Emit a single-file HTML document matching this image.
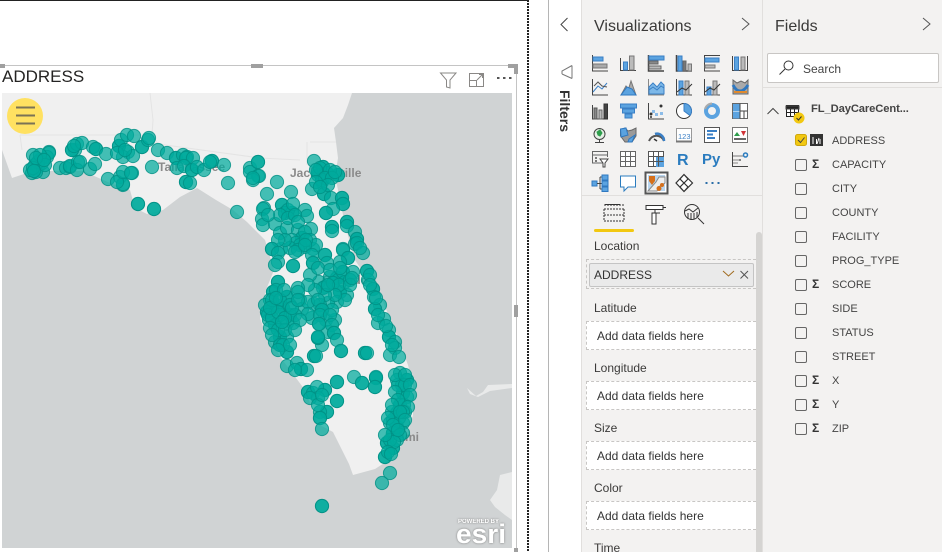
<!DOCTYPE html>
<html><head><meta charset="utf-8"><style>
html,body{margin:0;padding:0;width:942px;height:552px;overflow:hidden;background:#fff;font-family:"Liberation Sans",sans-serif;color:#333}
.a{position:absolute;white-space:nowrap}
.lb{position:absolute;left:594px;font-size:12px;line-height:14px;color:#3b3a39}
.bx{position:absolute;left:586px;width:169px;height:27px;background:#fff;border:1px dashed #c8c6c4;border-right:none;font-size:12px;line-height:29px;color:#333;text-indent:10px}
.f{position:absolute;left:832px;font-size:11px;line-height:14px;color:#444}
.c{position:absolute;left:795px;width:10px;height:10px;border:1px solid #666;border-radius:2px}
.s{position:absolute;left:812px;font-size:12px;line-height:14px;font-weight:bold;color:#333}
.d circle{r:6.6px}
</style></head><body>
<div class="a" style="left:0;top:0;width:527px;height:1px;background:#222"></div>
<div class="a" style="left:527px;top:0;width:2px;height:552px;background:repeating-linear-gradient(#222 0 2px,#fff 2px 3px)"></div>
<div class="a" style="left:0;top:65px;width:516px;height:1px;background:#c4c4c4"></div>
<div class="a" style="left:516px;top:65px;width:1px;height:487px;background:#c4c4c4"></div>
<div class="a" style="left:0;top:64px;width:5px;height:4px;background:#a0a0a0"></div>
<div class="a" style="left:251px;top:64px;width:12px;height:4px;background:#a0a0a0"></div>
<div class="a" style="left:508px;top:64px;width:10px;height:4px;background:#a0a0a0"></div>
<div class="a" style="left:514px;top:64px;width:4px;height:10px;background:#a0a0a0"></div>
<div class="a" style="left:514px;top:305px;width:4px;height:12px;background:#a0a0a0"></div>
<div class="a" style="left:514px;top:548px;width:4px;height:4px;background:#a0a0a0"></div>
<div class="a" style="left:2px;top:66px;font-size:17px;line-height:22px;color:#252423">ADDRESS</div>
<svg class="a" style="left:436px;top:68px" width="78" height="22" fill="none" stroke="#8a8886" stroke-width="1">
<path d="M4.5 5H20L14 12V20L10.500 19V12Z"/>
<path d="M33.500 5.500H47.500V18.500H33.500ZM33.500 12.500H40.500V18.500M41 12L46.500 6.500M43 6.500H46.500V10"/>
<path d="M61 10h2.500M67 10h2.500M73 10h2.500" stroke="#555" stroke-width="2"/>
</svg>

<svg class="a" style="left:2px;top:93px" width="510" height="455" viewBox="2 93 510 455">
<rect x="2" y="93" width="510" height="455" fill="#d0d3d4"/>
<path d="M2 93H352L348 105L343 118L334 128L336 142L338 158L335 176L338 190L345 225L355 260L368 280L380 295L395 330L408 365L413 385L413 415L406 438L397 452L386 462L375 469L353 475L349 464L338 442L333 432L318 424L305 390L284 362L266 335L260 318L266 290L274 270L265 240L247 222L233 210L216 200L197 188L180 197L163 210L147 214L135 208L130 190L110 183L83 171L33 171L12 178L2 150Z" fill="#f0f0f0"/>
<path d="M467 388L476 396L483 392L488 385L512 384V388L490 391L478 397L470 394ZM490 500L497 490L500 475L512 472V520L505 515L495 507Z" fill="#e9eaea"/>
<path d="M150 93L153 120L152 135M20 135H152L158 144L260 158L300 160M20 135L22 150M310 142H336M307 142V165" fill="none" stroke="#e4e4e4" stroke-width="1"/>
<g font-family="Liberation Sans" font-size="12" font-weight="bold" fill="#8a8a8a">
<text x="158" y="171">Tallahassee</text><text x="290" y="177">Jacksonville</text><text x="322" y="284">Orlando</text><text x="385" y="441">Miami</text>
</g>
<g class="d" fill="#00ab9c" fill-opacity=".72" stroke="#009084" stroke-opacity=".8">
<circle cx="33" cy="155" r="6"/><circle cx="49" cy="152" r="6"/><circle cx="40" cy="160" r="6"/><circle cx="38" cy="167" r="6"/><circle cx="32" cy="173" r="6"/><circle cx="43" cy="172" r="6"/><circle cx="35" cy="165" r="6"/><circle cx="47" cy="157" r="6"/><circle cx="49" cy="153" r="6"/><circle cx="42" cy="163" r="6"/><circle cx="36" cy="172" r="6"/><circle cx="38" cy="162" r="6"/><circle cx="30" cy="170" r="6"/>
<circle cx="40" cy="155" r="6"/><circle cx="45" cy="165" r="6"/><circle cx="33" cy="168" r="6"/><circle cx="75" cy="150" r="6"/><circle cx="36" cy="158" r="6"/><circle cx="44" cy="160" r="6"/><circle cx="34" cy="171" r="6"/>
<circle cx="60" cy="168" r="6"/><circle cx="66" cy="168" r="6"/><circle cx="70" cy="167" r="6"/><circle cx="70" cy="166" r="6"/><circle cx="78" cy="162" r="6"/><circle cx="77" cy="170" r="6"/><circle cx="80" cy="162" r="6"/><circle cx="90" cy="169" r="6"/><circle cx="95" cy="164" r="6"/><circle cx="72" cy="150" r="6"/><circle cx="72" cy="150" r="6"/><circle cx="77" cy="144" r="6"/><circle cx="82" cy="143" r="6"/><circle cx="74" cy="146" r="6"/><circle cx="96" cy="149" r="6"/><circle cx="93" cy="147" r="6"/><circle cx="96" cy="149" r="6"/><circle cx="106" cy="154" r="6"/>
<circle cx="108" cy="179" r="6"/><circle cx="120" cy="177" r="6"/><circle cx="123" cy="185" r="6"/><circle cx="123" cy="184" r="6"/><circle cx="132" cy="173" r="6"/><circle cx="117" cy="182" r="6"/><circle cx="123" cy="172" r="6"/><circle cx="131" cy="173" r="6"/>
<circle cx="138" cy="204" r="6"/><circle cx="138" cy="204" r="6"/><circle cx="154" cy="209" r="6"/><circle cx="154" cy="209" r="6"/>
<circle cx="119" cy="146" r="6"/><circle cx="119" cy="146" r="6"/><circle cx="121" cy="140" r="6"/><circle cx="127" cy="135" r="6"/><circle cx="134" cy="136" r="6"/><circle cx="128" cy="152" r="6"/><circle cx="123" cy="157" r="6"/><circle cx="133" cy="156" r="6"/><circle cx="117" cy="153" r="6"/><circle cx="125" cy="150" r="6"/><circle cx="142" cy="147" r="6"/><circle cx="142" cy="147" r="6"/><circle cx="148" cy="140" r="6"/><circle cx="149" cy="138" r="6"/>
<circle cx="152" cy="167" r="6"/><circle cx="158" cy="150" r="6"/><circle cx="167" cy="153" r="6"/><circle cx="176" cy="158" r="6"/><circle cx="176" cy="158" r="6"/><circle cx="183" cy="155" r="6"/><circle cx="187" cy="157" r="6"/><circle cx="186" cy="158" r="6"/><circle cx="193" cy="158" r="6"/><circle cx="177" cy="168" r="6"/><circle cx="184" cy="166" r="6"/><circle cx="192" cy="170" r="6"/><circle cx="192" cy="170" r="6"/><circle cx="197" cy="167" r="6"/><circle cx="186" cy="182" r="6"/><circle cx="186" cy="182" r="6"/><circle cx="190" cy="183" r="6"/><circle cx="204" cy="170" r="6"/><circle cx="212" cy="161" r="6"/><circle cx="212" cy="161" r="6"/><circle cx="210" cy="162" r="6"/><circle cx="224" cy="165" r="6"/><circle cx="228" cy="183" r="6"/>
<circle cx="237" cy="212" r="6"/><circle cx="250" cy="168" r="6"/><circle cx="250" cy="172" r="6"/><circle cx="258" cy="162" r="6"/><circle cx="258" cy="162" r="6"/><circle cx="258" cy="176" r="6"/><circle cx="259" cy="176" r="6"/><circle cx="253" cy="180" r="6"/><circle cx="253" cy="178" r="6"/><circle cx="277" cy="182" r="6"/><circle cx="267" cy="194" r="6"/><circle cx="291" cy="192" r="6"/><circle cx="264" cy="208" r="6"/><circle cx="263" cy="209" r="6"/><circle cx="262" cy="219" r="6"/><circle cx="282" cy="205" r="6"/><circle cx="282" cy="205" r="6"/><circle cx="263" cy="225" r="6"/><circle cx="275" cy="224" r="6"/><circle cx="280" cy="233" r="6"/><circle cx="287" cy="228" r="6"/><circle cx="285" cy="213" r="6"/><circle cx="285" cy="213" r="6"/><circle cx="292" cy="213" r="6"/><circle cx="292" cy="213" r="6"/><circle cx="288" cy="210" r="6"/><circle cx="293" cy="204" r="6"/><circle cx="305" cy="210" r="6"/><circle cx="307" cy="216" r="6"/><circle cx="311" cy="229" r="6"/><circle cx="298" cy="230" r="6"/><circle cx="302" cy="238" r="6"/><circle cx="302" cy="238" r="6"/><circle cx="292" cy="240" r="6"/><circle cx="305" cy="247" r="6"/><circle cx="296" cy="243" r="6"/><circle cx="272" cy="249" r="6"/><circle cx="281" cy="249" r="6"/><circle cx="313" cy="249" r="6"/>
<circle cx="280" cy="215" r="6"/><circle cx="288" cy="218" r="6"/><circle cx="295" cy="215" r="6"/><circle cx="298" cy="222" r="6"/><circle cx="305" cy="232" r="6"/><circle cx="310" cy="240" r="6"/><circle cx="316" cy="245" r="6"/><circle cx="300" cy="245" r="6"/><circle cx="290" cy="248" r="6"/><circle cx="285" cy="240" r="6"/><circle cx="278" cy="240" r="6"/><circle cx="268" cy="215" r="6"/><circle cx="298" cy="250" r="6"/><circle cx="306" cy="240" r="6"/>
<circle cx="314" cy="161" r="6"/><circle cx="323" cy="167" r="6"/><circle cx="323" cy="167" r="6"/><circle cx="318" cy="175" r="6"/><circle cx="318" cy="172" r="6"/><circle cx="327" cy="173" r="6"/><circle cx="327" cy="173" r="6"/><circle cx="320" cy="168" r="6"/><circle cx="338" cy="175" r="6"/><circle cx="338" cy="175" r="6"/><circle cx="330" cy="170" r="6"/><circle cx="322" cy="182" r="6"/><circle cx="322" cy="180" r="6"/><circle cx="312" cy="189" r="6"/><circle cx="324" cy="194" r="6"/><circle cx="324" cy="194" r="6"/><circle cx="331" cy="198" r="6"/><circle cx="342" cy="198" r="6"/><circle cx="342" cy="198" r="6"/><circle cx="343" cy="204" r="6"/><circle cx="343" cy="204" r="6"/><circle cx="333" cy="209" r="6"/><circle cx="326" cy="213" r="6"/><circle cx="326" cy="213" r="6"/><circle cx="332" cy="227" r="6"/><circle cx="332" cy="227" r="6"/><circle cx="332" cy="231" r="6"/><circle cx="347" cy="222" r="6"/><circle cx="347" cy="222" r="6"/><circle cx="347" cy="226" r="6"/><circle cx="355" cy="232" r="6"/><circle cx="357" cy="239" r="6"/><circle cx="357" cy="239" r="6"/><circle cx="355" cy="244" r="6"/><circle cx="343" cy="249" r="6"/>
<circle cx="316" cy="170" r="6"/><circle cx="325" cy="178" r="6"/><circle cx="332" cy="178" r="6"/><circle cx="316" cy="182" r="6"/><circle cx="328" cy="185" r="6"/><circle cx="320" cy="187" r="6"/><circle cx="335" cy="172" r="6"/>
<circle cx="272" cy="249" r="6"/><circle cx="278" cy="253" r="6"/><circle cx="278" cy="262" r="6"/><circle cx="275" cy="265" r="6"/><circle cx="293" cy="266" r="6"/><circle cx="293" cy="266" r="6"/><circle cx="295" cy="252" r="6"/><circle cx="305" cy="245" r="6"/><circle cx="312" cy="255" r="6"/><circle cx="313" cy="263" r="6"/><circle cx="313" cy="263" r="6"/><circle cx="325" cy="255" r="6"/><circle cx="325" cy="255" r="6"/><circle cx="327" cy="263" r="6"/><circle cx="343" cy="250" r="6"/><circle cx="348" cy="258" r="6"/><circle cx="348" cy="258" r="6"/><circle cx="340" cy="262" r="6"/><circle cx="357" cy="243" r="6"/><circle cx="363" cy="253" r="6"/><circle cx="360" cy="248" r="6"/>
<circle cx="367" cy="271" r="6"/><circle cx="367" cy="271" r="6"/><circle cx="368" cy="280" r="6"/><circle cx="373" cy="289" r="6"/><circle cx="373" cy="289" r="6"/><circle cx="374" cy="297" r="6"/><circle cx="380" cy="305" r="6"/><circle cx="375" cy="309" r="6"/><circle cx="375" cy="309" r="6"/><circle cx="384" cy="319" r="6"/><circle cx="378" cy="323" r="6"/><circle cx="389" cy="330" r="6"/><circle cx="389" cy="337" r="6"/><circle cx="389" cy="337" r="6"/><circle cx="395" cy="342" r="6"/><circle cx="395" cy="348" r="6"/><circle cx="390" cy="355" r="6"/><circle cx="399" cy="357" r="6"/>
<circle cx="370" cy="275" r="6"/><circle cx="370" cy="285" r="6"/><circle cx="376" cy="298" r="6"/><circle cx="378" cy="315" r="6"/><circle cx="392" cy="345" r="6"/><circle cx="386" cy="326" r="6"/>
<circle cx="319" cy="282" r="6"/><circle cx="325" cy="287" r="6"/><circle cx="330" cy="277" r="6"/><circle cx="337" cy="278" r="6"/><circle cx="337" cy="278" r="6"/><circle cx="343" cy="272" r="6"/><circle cx="343" cy="272" r="6"/><circle cx="353" cy="272" r="6"/><circle cx="340" cy="292" r="6"/><circle cx="340" cy="292" r="6"/><circle cx="347" cy="295" r="6"/><circle cx="337" cy="302" r="6"/><circle cx="328" cy="303" r="6"/><circle cx="323" cy="288" r="6"/><circle cx="333" cy="283" r="6"/><circle cx="333" cy="283" r="6"/><circle cx="345" cy="282" r="6"/><circle cx="339" cy="285" r="6"/><circle cx="350" cy="280" r="6"/>
<circle cx="310" cy="275" r="6"/><circle cx="318" cy="268" r="6"/><circle cx="330" cy="270" r="6"/><circle cx="340" cy="268" r="6"/><circle cx="350" cy="285" r="6"/><circle cx="345" cy="300" r="6"/><circle cx="335" cy="295" r="6"/><circle cx="325" cy="295" r="6"/><circle cx="315" cy="290" r="6"/><circle cx="308" cy="285" r="6"/><circle cx="328" cy="285" r="6"/><circle cx="352" cy="278" r="6"/><circle cx="320" cy="305" r="6"/><circle cx="312" cy="318" r="6"/><circle cx="326" cy="320" r="6"/><circle cx="328" cy="332" r="6"/><circle cx="322" cy="345" r="6"/><circle cx="335" cy="320" r="6"/><circle cx="300" cy="300" r="6"/><circle cx="314" cy="304" r="6"/><circle cx="332" cy="310" r="6"/>
<circle cx="278" cy="282" r="6"/><circle cx="278" cy="282" r="6"/><circle cx="273" cy="292" r="6"/><circle cx="273" cy="292" r="6"/><circle cx="270" cy="300" r="6"/><circle cx="287" cy="297" r="6"/><circle cx="287" cy="297" r="6"/><circle cx="298" cy="288" r="6"/><circle cx="298" cy="292" r="6"/><circle cx="283" cy="308" r="6"/><circle cx="283" cy="308" r="6"/><circle cx="290" cy="315" r="6"/><circle cx="290" cy="315" r="6"/><circle cx="267" cy="312" r="6"/><circle cx="267" cy="312" r="6"/><circle cx="269" cy="320" r="6"/><circle cx="275" cy="325" r="6"/><circle cx="275" cy="325" r="6"/><circle cx="287" cy="323" r="6"/><circle cx="293" cy="323" r="6"/><circle cx="276" cy="305" r="6"/><circle cx="272" cy="310" r="6"/><circle cx="280" cy="315" r="6"/><circle cx="280" cy="337" r="6"/><circle cx="280" cy="337" r="6"/><circle cx="287" cy="337" r="6"/><circle cx="275" cy="342" r="6"/><circle cx="280" cy="345" r="6"/><circle cx="280" cy="345" r="6"/><circle cx="287" cy="352" r="6"/><circle cx="287" cy="352" r="6"/><circle cx="302" cy="309" r="6"/><circle cx="308" cy="302" r="6"/><circle cx="318" cy="300" r="6"/><circle cx="308" cy="314" r="6"/><circle cx="322" cy="310" r="6"/><circle cx="322" cy="310" r="6"/><circle cx="320" cy="315" r="6"/><circle cx="330" cy="315" r="6"/><circle cx="319" cy="324" r="6"/><circle cx="319" cy="324" r="6"/><circle cx="332" cy="325" r="6"/><circle cx="334" cy="333" r="6"/><circle cx="334" cy="333" r="6"/><circle cx="318" cy="338" r="6"/><circle cx="318" cy="338" r="6"/><circle cx="318" cy="337" r="6"/><circle cx="337" cy="340" r="6"/><circle cx="341" cy="351" r="6"/><circle cx="341" cy="351" r="6"/><circle cx="314" cy="356" r="6"/><circle cx="314" cy="356" r="6"/><circle cx="316" cy="356" r="6"/><circle cx="365" cy="353" r="6"/><circle cx="365" cy="353" r="6"/><circle cx="367" cy="353" r="6"/>
<circle cx="265" cy="305" r="6"/><circle cx="268" cy="315" r="6"/><circle cx="272" cy="300" r="6"/><circle cx="276" cy="290" r="6"/><circle cx="280" cy="300" r="6"/><circle cx="284" cy="290" r="6"/><circle cx="290" cy="305" r="6"/><circle cx="295" cy="315" r="6"/><circle cx="300" cy="320" r="6"/><circle cx="272" cy="318" r="6"/><circle cx="278" cy="312" r="6"/><circle cx="285" cy="318" r="6"/><circle cx="292" cy="308" r="6"/><circle cx="298" cy="300" r="6"/><circle cx="270" cy="328" r="6"/><circle cx="278" cy="330" r="6"/><circle cx="285" cy="330" r="6"/><circle cx="295" cy="330" r="6"/><circle cx="272" cy="335" r="6"/><circle cx="283" cy="345" r="6"/><circle cx="290" cy="345" r="6"/><circle cx="278" cy="350" r="6"/><circle cx="270" cy="308" r="6"/><circle cx="282" cy="322" r="6"/><circle cx="276" cy="298" r="6"/>
<circle cx="287" cy="366" r="6"/><circle cx="297" cy="363" r="6"/><circle cx="301" cy="369" r="6"/><circle cx="301" cy="369" r="6"/><circle cx="307" cy="370" r="6"/><circle cx="295" cy="370" r="6"/>
<circle cx="337" cy="382" r="6"/><circle cx="337" cy="382" r="6"/><circle cx="354" cy="377" r="6"/><circle cx="362" cy="383" r="6"/><circle cx="362" cy="383" r="6"/><circle cx="376" cy="378" r="6"/><circle cx="376" cy="378" r="6"/><circle cx="376" cy="377" r="6"/><circle cx="375" cy="387" r="6"/><circle cx="375" cy="387" r="6"/>
<circle cx="308" cy="392" r="6"/><circle cx="308" cy="392" r="6"/><circle cx="313" cy="393" r="6"/><circle cx="325" cy="390" r="6"/><circle cx="325" cy="390" r="6"/><circle cx="317" cy="387" r="6"/><circle cx="318" cy="398" r="6"/><circle cx="310" cy="398" r="6"/><circle cx="337" cy="401" r="6"/><circle cx="337" cy="401" r="6"/><circle cx="327" cy="412" r="6"/><circle cx="327" cy="412" r="6"/><circle cx="320" cy="412" r="6"/><circle cx="320" cy="418" r="6"/><circle cx="320" cy="418" r="6"/><circle cx="322" cy="429" r="6"/><circle cx="318" cy="405" r="6"/><circle cx="322" cy="395" r="6"/>
<circle cx="400" cy="373" r="6"/><circle cx="407" cy="380" r="6"/><circle cx="407" cy="380" r="6"/><circle cx="397" cy="380" r="6"/><circle cx="403" cy="393" r="6"/><circle cx="403" cy="393" r="6"/><circle cx="402" cy="385" r="6"/><circle cx="407" cy="397" r="6"/><circle cx="400" cy="405" r="6"/><circle cx="400" cy="405" r="6"/><circle cx="405" cy="412" r="6"/><circle cx="397" cy="413" r="6"/><circle cx="397" cy="413" r="6"/><circle cx="390" cy="423" r="6"/><circle cx="397" cy="427" r="6"/><circle cx="397" cy="427" r="6"/><circle cx="403" cy="423" r="6"/><circle cx="403" cy="433" r="6"/><circle cx="393" cy="433" r="6"/><circle cx="393" cy="433" r="6"/><circle cx="387" cy="443" r="6"/><circle cx="387" cy="443" r="6"/><circle cx="393" cy="448" r="6"/><circle cx="393" cy="448" r="6"/><circle cx="385" cy="457" r="6"/><circle cx="385" cy="457" r="6"/><circle cx="397" cy="440" r="6"/><circle cx="399" cy="418" r="6"/><circle cx="393" cy="420" r="6"/><circle cx="392" cy="412" r="6"/><circle cx="390" cy="440" r="6"/><circle cx="398" cy="385" r="6"/><circle cx="405" cy="385" r="6"/><circle cx="404" cy="405" r="6"/>
<circle cx="395" cy="375" r="6"/><circle cx="405" cy="375" r="6"/><circle cx="410" cy="385" r="6"/><circle cx="410" cy="395" r="6"/><circle cx="395" cy="392" r="6"/><circle cx="398" cy="400" r="6"/><circle cx="408" cy="407" r="6"/><circle cx="403" cy="412" r="6"/><circle cx="392" cy="405" r="6"/><circle cx="400" cy="412" r="6"/><circle cx="388" cy="418" r="6"/><circle cx="393" cy="425" r="6"/><circle cx="405" cy="420" r="6"/><circle cx="400" cy="435" r="6"/><circle cx="394" cy="442" r="6"/><circle cx="388" cy="452" r="6"/><circle cx="398" cy="430" r="6"/><circle cx="385" cy="435" r="6"/><circle cx="391" cy="454" r="6"/>
<circle cx="390" cy="473" r="6"/><circle cx="382" cy="483" r="6"/><circle cx="322" cy="506" r="6"/><circle cx="322" cy="506" r="6"/>
</g>
<circle cx="25" cy="116" r="18" fill="#ffe161"/>
<path d="M16 107.500H35M16 115.500H35M16 123.500H35" stroke="#7b7355" stroke-width="2"/>
<g fill="#fff" style="filter:drop-shadow(0 0 1px #777)" font-family="Liberation Sans">
<text x="458" y="523" font-size="6" font-weight="bold">POWERED BY</text>
<text x="456" y="543" font-size="27" font-weight="bold" textLength="50" lengthAdjust="spacingAndGlyphs">esri</text>
</g>
</svg>

<!-- filter pane -->
<div class="a" style="left:548px;top:0;width:1px;height:552px;background:#b5b5b5"></div>
<div class="a" style="left:581px;top:0;width:361px;height:552px;background:#f3f2f1;border-left:1px solid #e1dfdd;box-sizing:border-box"></div>
<div class="a" style="left:762px;top:0;width:1px;height:552px;background:#e1dfdd"></div>
<svg class="a" style="left:555px;top:15px" width="20" height="65" fill="none" stroke="#444"><path d="M12.500 3L6 9.500L12.500 16"/><path d="M17 50.500L7 56V59M17 63.500V50.500M7 59L17 63.500" stroke="#777"/></svg>
<div class="a" style="left:565px;top:111px;width:0;height:0"><div style="position:absolute;left:-22px;top:-8px;width:44px;height:16px;transform:rotate(90deg);font-size:14px;font-weight:bold;line-height:16px;text-align:center;color:#333">Filters</div></div>

<!-- viz -->
<div class="a" style="left:594px;top:17px;font-size:16px;line-height:20px;color:#3b3a39">Visualizations</div>
<svg class="a" style="left:740px;top:16px" width="12" height="16" fill="none" stroke="#555"><path d="M2 2L9 8L2 14"/></svg>
<svg class="a" style="left:590px;top:52px" width="165" height="180" viewBox="590 52 165 180" fill="none" stroke="#444" stroke-width="1">
<!-- row 1 -->
<g transform="translate(592,55)"><path d="M.5 0V16H16"/><rect x="1" y="2" width="10" height="4" stroke="#3a7fc5" fill="#5ba3e0"/><rect x="1" y="9" width="14" height="4" stroke="#777" fill="#aaa"/></g>
<g transform="translate(620,55)"><path d="M.5 3V15.500H16"/><rect x="3.500" y="7" width="4" height="8" stroke="#3a7fc5" fill="#5ba3e0"/><rect x="9.500" y="1" width="4.500" height="14" stroke="#777" fill="#bbb"/></g>
<g transform="translate(648,55)"><path d="M.5 0V16H16" stroke-width="1.500"/><rect x="1" y="1" width="15" height="4" fill="#5ba3e0" stroke="#3a7fc5"/><rect x="1" y="6" width="9" height="3" fill="#888" stroke="#666"/><rect x="1" y="11" width="12" height="3" fill="#bbb" stroke="#666"/></g>
<g transform="translate(676,55)"><path d="M.5 0V16H16" stroke-width="1.500"/><rect x="2" y="1" width="4" height="15" fill="#5ba3e0" stroke="#3a7fc5"/><rect x="7" y="6" width="3" height="10" fill="#777" stroke="#666"/><rect x="12" y="9" width="3.500" height="7" fill="#bbb" stroke="#777"/></g>
<g transform="translate(704,55)"><path d="M.5 0V16H16M1 .5H16"/><rect x="1" y="3" width="14" height="4" fill="#5ba3e0" stroke="#3a7fc5"/><rect x="1" y="10" width="10" height="3" fill="#bbb" stroke="#777"/></g>
<g transform="translate(732,55)"><path d="M.5 1V15.500H16M15.500 1V15"/><rect x="2.500" y="2" width="4" height="13" fill="#5ba3e0" stroke="#3a7fc5"/><rect x="9" y="2" width="4" height="13" fill="#bbb" stroke="#777"/></g>
<!-- row 2 -->
<g transform="translate(592,79)"><path d="M.5 0V16H16"/><path d="M1 13L6 7L10 10L15 4" stroke="#3a7fc5"/><path d="M2 7L6 3L10 7L15 8" stroke="#555"/></g>
<g transform="translate(620,79)"><path d="M1 16L6 7L8.500 10L11 2L16 16Z" fill="#aaa" stroke="#777"/><path d="M1 16L7 8L12 10L16 16Z" fill="#5ba3e0" stroke="#2f78c0"/></g>
<g transform="translate(648,79)"><path d="M.5 0V16H16" stroke="#888"/><path d="M1 8L5 4L9 8L13 3L16 6V15H1Z" fill="#7db8e8" stroke="#3a7fc5"/><path d="M1 11L5 8L9 11L13 7L16 9" stroke="#3a7fc5"/></g>
<g transform="translate(676,79)"><path d="M.5 0V16H16"/><rect x="3" y="2" width="4" height="14" fill="#5ba3e0" stroke="#3a7fc5"/><rect x="9" y="2" width="4" height="14" fill="#bbb" stroke="#777"/><path d="M1 13L6 9L10 11L16 5" stroke="#333"/></g>
<g transform="translate(704,79)"><path d="M.5 0V16H16"/><rect x="3" y="8" width="4" height="8" fill="#5ba3e0" stroke="#3a7fc5"/><rect x="9" y="2" width="4" height="14" fill="#bbb" stroke="#777"/><path d="M1 13L6 9L10 11L16 5" stroke="#333"/></g>
<g transform="translate(732,79)"><path d="M1 1L5 4L9 2L13 4L16 1V15H1Z" fill="#aaa" stroke="#666"/><path d="M1 6C5 14 11 14 16 6" stroke="#2f78c0" stroke-width="3"/><path d="M2 13H15" stroke="#e08a2e" stroke-width="2"/></g>
<!-- row 3 -->
<g transform="translate(592,103)"><path d="M.5 2V16H16"/><rect x="2" y="5" width="3" height="11" fill="#888" stroke="#555"/><rect x="7" y="7" width="3" height="9" fill="#bbb" stroke="#666"/><rect x="12" y="1" width="3.500" height="15" fill="#444" stroke="#333"/></g>
<g transform="translate(620,103)" stroke="#3a7fc5" fill="#5ba3e0"><rect x=".5" y="1" width="16" height="4"/><rect x="2.500" y="6" width="12" height="4"/><rect x="5" y="11" width="7" height="4"/></g>
<g transform="translate(648,103)"><path d="M.5 0V16H16"/><rect x="4" y="7" width="3" height="3" fill="#8cbce8" stroke="none"/><rect x="7" y="10" width="3" height="3" fill="#8cbce8" stroke="none"/><rect x="12" y="9" width="3" height="3" fill="#8cbce8" stroke="none"/><circle cx="3" cy="11" r="1.500" fill="#333" stroke="none"/><circle cx="13" cy="3" r="1.500" fill="#333" stroke="none"/><circle cx="3" cy="14" r="1" fill="#333" stroke="none"/></g>
<g transform="translate(676,103)"><circle cx="8" cy="8" r="7.500" fill="#fff" stroke="#333"/><path d="M8 .5A7.500 7.500 0 0 1 14 12.500L8 8Z" fill="#5ba3e0" stroke="#3a7fc5"/></g>
<g transform="translate(704,103)"><circle cx="8" cy="8" r="6" fill="none" stroke="#5ba3e0" stroke-width="4"/><path d="M8 .5A7.500 7.500 0 0 0 1 6" stroke="#aaa" stroke-width="2"/></g>
<g transform="translate(732,103)"><rect x=".5" y=".5" width="15" height="15" fill="#fff" stroke="#666"/><rect x="1" y="1" width="7" height="7" fill="#5ba3e0" stroke="none"/><rect x="1" y="8.500" width="7" height="7" fill="#5ba3e0" stroke="none"/><path d="M8 .5V15.500M8 8H15.500M12 8V15.500"/></g>
<!-- row 4 -->
<g transform="translate(592,127)"><circle cx="7.500" cy="7" r="5.500" fill="#e6f0e6"/><path d="M5 5L8 3L10 6L8 9L6 8Z" fill="#2e9e4c" stroke="#2e9e4c"/><path d="M7.500 12.500V15.500M3 15.500H12"/></g>
<g transform="translate(620,127)"><path d="M.5 3L5 1L8 4L12 3L16 1V9L12 15H5L.5 9Z" fill="#9a9a9a" stroke="#666"/><path d="M.5 2L6 1L8 8L1 10Z" fill="#5ba3e0" stroke="#2f78c0"/><path d="M9 12L15 8L12 15H8Z" fill="#5ba3e0" stroke="#2f78c0"/></g>
<g transform="translate(648,127)"><path d="M1 14A8 8 0 0 1 16 14" stroke="#555" stroke-width="2"/><path d="M7 7A7 7 0 0 1 16 14" stroke="#3a7fc5" stroke-width="2.500"/><path d="M6 12L9 14" stroke="#333" stroke-width="1.500"/></g>
<g transform="translate(676,127)"><rect x=".5" y="1.500" width="15" height="13" fill="#fff" stroke="#999"/><path d="M0 14.500H16" stroke="#777" stroke-width="2"/><text x="2" y="12" font-size="7.500" font-family="Liberation Sans" fill="#3a7fc5" stroke="none">123</text></g>
<g transform="translate(704,127)"><rect x=".5" y=".5" width="15" height="15" fill="#fff" stroke="#555"/><path d="M3 4H13M3 7.500H9M3 11H11" stroke="#3a7fc5" stroke-width="2"/></g>
<g transform="translate(732,127)"><rect x=".5" y=".5" width="15" height="15" fill="#fff" stroke="#777"/><path d="M2 9L5 5L8 9Z" fill="#2e9e4c" stroke="none"/><path d="M9 4H14L11.500 9Z" fill="#d13438" stroke="none"/><path d="M2 12H14" stroke="#666" stroke-width="2"/></g>
<!-- row 5 -->
<g transform="translate(592,151)"><path d="M11 12H.5V.5H15.500V6" stroke="#666"/><path d="M1 4H15" stroke="#666"/><rect x="3" y="6" width="2" height="2" fill="#777" stroke="none"/><rect x="3" y="9" width="2" height="2" fill="#777" stroke="none"/><path d="M8 8H16L13 12V16H11V12Z" fill="#fff"/></g>
<g transform="translate(620,151)" stroke="#666"><rect x=".5" y=".5" width="15" height="15" fill="#fff"/><path d="M.5 5.500H15.500M.5 10.500H15.500M5.500 .5V15.500M10.500 .5V15.500"/></g>
<g transform="translate(648,151)" stroke="#555"><rect x=".5" y=".5" width="15" height="15" fill="#fff"/><rect x="8" y="6" width="8" height="10" fill="#5ba3e0" stroke="none"/><path d="M.5 5.500H15.500M.5 10.500H15.500M5.500 .5V15.500M10.500 .5V15.500"/></g>
<text x="677" y="165" font-family="Liberation Sans" font-size="16" font-weight="bold" fill="#2b7cbf" stroke="none">R</text>
<text x="702" y="164" font-family="Liberation Sans" font-size="15" font-weight="bold" fill="#2b7cbf" stroke="none">Py</text>
<g transform="translate(732,151)"><path d="M.5 1V15.500H16"/><path d="M1 5H12" stroke="#777"/><path d="M1 9H9M1 12H6" stroke="#888"/><circle cx="13.500" cy="4" r="2" stroke="#2b7cbf" stroke-width="1.500"/><circle cx="8" cy="9" r="1" fill="#666" stroke="none"/></g>
<!-- row 6 -->
<g transform="translate(592,175)"><rect x="0" y="6" width="5" height="5" fill="#5ba3e0" stroke="#2f78c0"/><path d="M5 8.500H8M8 2V14M8 2H10M8 8.500H10M8 14H10"/><rect x="10" y="0" width="6" height="5" fill="#5ba3e0" stroke="#2f78c0"/><rect x="10" y="6" width="6" height="5" fill="#5ba3e0" stroke="#2f78c0"/><rect x="10" y="12" width="6" height="4.500" fill="#5ba3e0" stroke="#2f78c0"/></g>
<g transform="translate(620,175)"><path d="M.5 1H15.500V12H8L4 16V12H.5Z" fill="#fff" stroke="#2b7cbf"/></g>
<rect x="645.500" y="172.500" width="22" height="21" fill="#fff" stroke="#555" stroke-width="2"/>
<g transform="translate(648,175)"><rect x="0" y="0" width="17" height="16" fill="#b9d5ee" stroke="none"/><path d="M0 16L8 7L11 2H17V8L12 11L9 16Z" fill="#eee" stroke="#888"/><path d="M1 1H7V6L4 10L1 6Z" fill="#d5701c" stroke="none"/><circle cx="14" cy="10" r="2" fill="#d5701c" stroke="none"/><circle cx="11" cy="13.500" r="2.500" fill="#d5701c" stroke="none"/></g>
<g transform="translate(676,174)"><path d="M8 .5L16.500 9L8 17.500L0 9Z M8 .5L12 5L8 9L4 5Z M8 9L12 13L8 17.500L4 13Z" stroke="#333" stroke-width="1.200" fill="#fff"/></g>
<path d="M705.500 183h2M711.500 183h2M717.500 183h2" stroke="#2b6ea8" stroke-width="2"/>
<!-- tabs -->
<path d="M604 205H624M604 209H624M604 215H624M604 221H624M604 209V221M624 209V221" stroke="#333" stroke-dasharray="2 1"/>
<path d="M605 204.500H620" stroke="#333"/>
<path d="M646 205.500H663V209.500H646ZM663 207.500H666M655 209.500V213H660V213M654 213H656V224H652V213Z" stroke="#333" fill="#fff"/>
<circle cx="692" cy="212" r="7.500" stroke="#333" fill="#f3f2f1"/><path d="M685 211L689 209L693 212L698 208M688 213V219M691 213V220M694 213V219M697 212V218" stroke="#333"/><path d="M698 218L704 224" stroke="#333"/>
</svg>
<div class="a" style="left:581px;top:195px;width:181px;height:1px;background:#e1dfdd"></div>
<div class="a" style="left:594px;top:229px;width:40px;height:3px;background:#f2c811;border-radius:2px"></div>
<div class="a" style="left:756px;top:232px;width:6px;height:320px;background:#d5d4d2;border-radius:3px 3px 0 0"></div>

<div class="lb" style="top:239px">Location</div>
<div class="a" style="left:586px;top:259px;width:169px;height:28px;border:1px dashed #c8c6c4;border-right:none"></div>
<div class="a" style="left:589px;top:263px;width:163px;height:22px;background:#eaeaea;border:1px solid #c4c4c4;border-radius:2px;font-size:12px;line-height:22px;text-indent:4px;color:#333">ADDRESS</div>
<svg class="a" style="left:721px;top:268px" width="28" height="14" fill="none"><path d="M2 3L7.500 8L13 3" stroke="#a06a1e"/><path d="M19.500 3L27 10.500M27 3L19.500 10.500" stroke="#555"/></svg>
<div class="lb" style="top:301px">Latitude</div><div class="bx" style="top:321px">Add data fields here</div>
<div class="lb" style="top:361px">Longitude</div><div class="bx" style="top:381px">Add data fields here</div>
<div class="lb" style="top:421px">Size</div><div class="bx" style="top:441px">Add data fields here</div>
<div class="lb" style="top:481px">Color</div><div class="bx" style="top:501px">Add data fields here</div>
<div class="lb" style="top:541px">Time</div>

<!-- fields -->
<div class="a" style="left:775px;top:17px;font-size:16px;line-height:20px;color:#3b3a39">Fields</div>
<svg class="a" style="left:921px;top:16px" width="12" height="16" fill="none" stroke="#555"><path d="M2 2L9 8L2 14"/></svg>
<div class="a" style="left:767px;top:53px;width:170px;height:28px;background:#fff;border:1px solid #c8c6c4;border-radius:2px"></div>
<svg class="a" style="left:778px;top:59px" width="18" height="18" fill="none" stroke="#333"><circle cx="10.500" cy="6.500" r="4.500"/><path d="M7 10L1.500 15.500"/></svg>
<div class="a" style="left:803px;top:62px;font-size:12px;line-height:14px;color:#444">Search</div>
<div class="a" style="left:763px;top:87px;width:179px;height:1px;background:#e1dfdd"></div>
<svg class="a" style="left:765px;top:100px" width="50" height="50" fill="none" stroke="#444">
<path d="M2.500 14L8 8.500L13.500 14"/>
<rect x="21.500" y="5.500" width="12" height="11" fill="#fff" stroke="#222"/><path d="M21 6H34V9H21Z" fill="#222"/><path d="M21.500 12.500H33.500M25.500 9V16.500M29.500 9V16.500" stroke="#222"/>
<circle cx="34" cy="18" r="5.500" fill="#f2c811" stroke="none"/><path d="M31.500 18L33.500 20L36.500 16.500" stroke="#333"/>
<rect x="30.500" y="34.500" width="11" height="11" rx="2" fill="#f2c811" stroke="#d0a80c"/><path d="M33 40L35.500 42.500L39.500 37.500" stroke="#444"/>
<rect x="45.500" y="34.500" width="4.500" height="11" fill="#333" stroke="#333"/>
</svg>
<svg class="a" style="left:810px;top:134px" width="14" height="13" fill="none" stroke="#333"><rect x=".5" y=".5" width="12" height="11" fill="#333"/><path d="M3 3V10M6.500 5V10M9 4L7 10M10 5V10" stroke="#fff"/></svg>
<div class="a" style="left:811px;top:102px;font-size:11.200px;font-weight:bold;line-height:14px;color:#444;letter-spacing:-.1px">FL_DayCareCent...</div>
<div class="f" style="top:134px">ADDRESS</div>
<div class="c" style="top:159px"></div><div class="s" style="top:157px">Σ</div><div class="f" style="top:158px">CAPACITY</div>
<div class="c" style="top:183px"></div><div class="f" style="top:182px">CITY</div>
<div class="c" style="top:207px"></div><div class="f" style="top:206px">COUNTY</div>
<div class="c" style="top:231px"></div><div class="f" style="top:230px">FACILITY</div>
<div class="c" style="top:255px"></div><div class="f" style="top:254px">PROG_TYPE</div>
<div class="c" style="top:279px"></div><div class="s" style="top:277px">Σ</div><div class="f" style="top:278px">SCORE</div>
<div class="c" style="top:303px"></div><div class="f" style="top:302px">SIDE</div>
<div class="c" style="top:327px"></div><div class="f" style="top:326px">STATUS</div>
<div class="c" style="top:351px"></div><div class="f" style="top:350px">STREET</div>
<div class="c" style="top:375px"></div><div class="s" style="top:373px">Σ</div><div class="f" style="top:374px">X</div>
<div class="c" style="top:399px"></div><div class="s" style="top:397px">Σ</div><div class="f" style="top:398px">Y</div>
<div class="c" style="top:423px"></div><div class="s" style="top:421px">Σ</div><div class="f" style="top:422px">ZIP</div>
</body></html>
